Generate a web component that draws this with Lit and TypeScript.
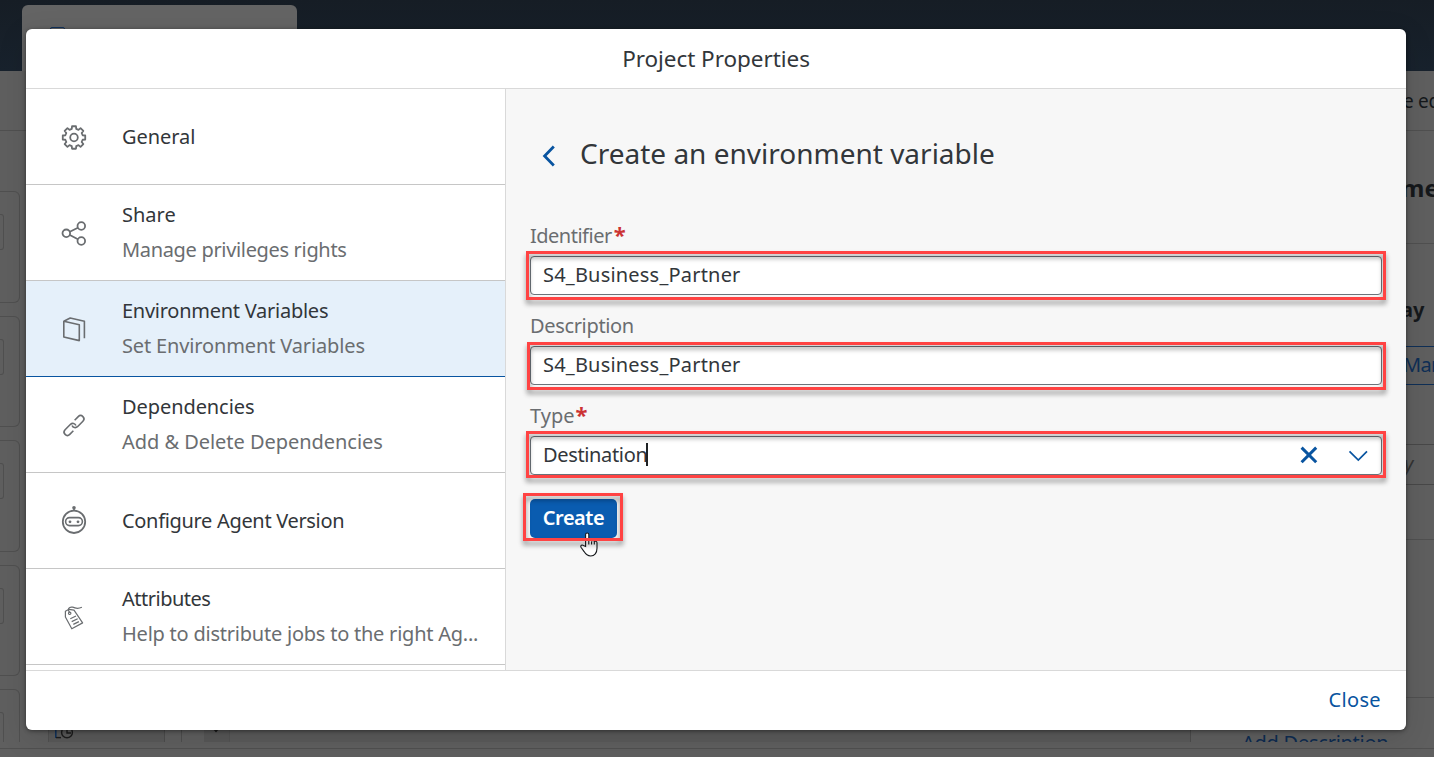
import { LitElement, html, svg, css } from "lit";
import { customElement } from "lit/decorators.js";
import { classMap } from "lit/directives/class-map.js";
import { styleMap } from "lit/directives/style-map.js";

const gearPath = (() => {
  const pts: string[] = [];
  for (let k = 0; k < 8; k++) {
    for (const [r, d] of [[8.9, -14.5], [11.4, -10], [11.4, 10], [8.9, 14.5]]) {
      const a = ((k * 45 + d) * Math.PI) / 180;
      pts.push(`${(13 + r * Math.sin(a)).toFixed(2)} ${(16.5 - r * Math.cos(a)).toFixed(2)}`);
    }
  }
  return `M${pts.join("L")}Z`;
})();

const icons = {
  gear: svg`<path d=${gearPath} stroke-width="1.8"/><circle cx="13" cy="16.5" r="3.8" stroke-width="1.8"/>`,
  share: svg`<g stroke-width="1.8"><circle cx="5.3" cy="16.3" r="3.8"/><circle cx="20.3" cy="9" r="3.8"/><circle cx="20.3" cy="24" r="3.8"/><path d="M8.8 14.8L16.9 10.8M8.8 18L16.9 22.2"/></g>`,
  book: svg`<path d="M2.8 8.3L18.3 11.7V27.6L2.8 24ZM2.8 8.3L9.2 5L23.4 8.2V25.3"/>`,
  link: svg`<g transform="translate(13 16.5) rotate(-45)"><path d="M-4.2 3.3H-9.3a3.3 3.3 0 0 1 0-6.6H-1.6a3.3 3.3 0 0 1 2.9 4.7"/><path d="M4.2-3.3H9.3a3.3 3.3 0 0 1 0 6.6H1.6a3.3 3.3 0 0 1-2.9-4.7"/></g>`,
  robot: svg`<circle cx="13" cy="16.8" r="11.2" stroke-width="1.8"/><rect x="4.6" y="12.6" width="16.8" height="8" rx="4"/><circle cx="9" cy="16.8" r="1.4" class="dot"/><circle cx="17" cy="16.8" r="1.4" class="dot"/><circle cx="13" cy="2.7" r="1.8" class="dot"/><path d="M13 3V6"/>`,
  tag: svg`<g stroke-width="1.2"><path d="M4.4 10.2L8 8.3L13 9.2L21.6 21.9L10.8 27.8L4.4 16Z"/><circle cx="8.7" cy="12.3" r="1.2"/><path d="M8.7 11.5C6 8 8 5.6 11.5 6.2C15 6.8 15.5 8.6 20.9 6.3M9.3 17.7L15 15M10.7 20.6L16.7 17.7M12.3 23.4L17.9 20.6"/></g>`,
};

interface Item { icon: keyof typeof icons; title: string; ts: number; sub?: string; ss?: number; selected?: boolean }

const items: Item[] = [
  { icon: "gear", title: "General", ts: -0.05 },
  { icon: "share", title: "Share", ts: 0 },
  { icon: "book", title: "Environment Variables", ts: -0.26, sub: "Set Environment Variables", ss: -0.14, selected: true },
  { icon: "link", title: "Dependencies", ts: -0.08, sub: "Add & Delete Dependencies", ss: -0.04 },
  { icon: "robot", title: "Configure Agent Version", ts: -0.32 },
  { icon: "tag", title: "Attributes", ts: -0.5, sub: "Help to distribute jobs to the right Ag...", ss: -0.23 },
];
items[1].sub = "Manage privileges rights";
items[1].ss = -0.33;

@customElement("page-backdrop")
class PageBackdrop extends LitElement {
  static styles = css`
    :host { display: flex; flex-direction: column; height: 757px; overflow: hidden; background: #5f5f5f; color: #15181b;
      font-family: "Noto Sans", sans-serif; font-size: 20px; box-sizing: border-box; }
    .shell { height: 71px; padding: 5px 0 0 22px; background: linear-gradient(#161d25, #18222d); box-sizing: border-box; flex: none; }
    .tab { width: 275px; height: 66px; border-radius: 6px 6px 0 0; background: #646464; box-sizing: border-box; padding: 22px 0 0 28px; }
    .tabicon { width: 13px; height: 20px; border: 1px solid #12335c; border-radius: 2px; }
    .bar { height: 59px; border-bottom: 1px solid #505050; line-height: 60px; padding-left: 1403px; white-space: nowrap; flex: none; font-size: 19px; letter-spacing: -0.3px; }
    .main { display: grid; grid-template-columns: 49px 116px 1025px 1fr; grid-template-rows: 100%; height: 611px; overflow: hidden; flex: none; }
    .cards { display: flex; flex-direction: column; gap: 13px; padding-top: 60px; box-sizing: border-box; border-right: 1px solid #505050; }
    .card { width: 20px; height: 111.6px; border: 1px solid #505050; border-left: 0; border-radius: 0 6px 6px 0; box-sizing: border-box; padding-top: 22px; flex: none; }
    .chip { width: 4px; height: 36px; border: 1px solid #505050; border-left: 0; border-radius: 0 3px 3px 0; box-sizing: border-box; }
    .tile { display: flex; align-items: flex-end; background: #595959; border-right: 1px solid #4c4c4c; padding-left: 5px; }
    .tile svg { display: block; }
    .canvas { display: flex; align-items: flex-end; }
    .gap { width: 16px; height: 100%; border-right: 1px solid #4e4e4e; }
    .drop { margin-left: 22px; width: 25px; height: 20px; background: #575757; border-right: 1px solid #525252; }
    .drop svg { display: block; margin-left: 7px; }
    .fill { flex: 1; height: 100%; background: #5a5a5a; }
    .panel { border-left: 1px solid #4c4c4c; display: flex; flex-direction: column; white-space: nowrap; }
    .head { height: 112px; border-bottom: 1px solid #505050; line-height: 113px; font-weight: 700; font-size: 24px; padding-left: 210px; flex: none; }
    .label { height: 102px; font-weight: 700; line-height: 132px; padding-left: 210px; flex: none; }
    .btn { height: 37px; border: 1px solid #0f2f56; border-width: 1px 0; color: #0f2f56; line-height: 36px; padding-left: 212px; letter-spacing: -0.7px; flex: none; }
    .input { margin-top: 59px; height: 39px; border: 1px solid #484848; border-width: 1px 0; line-height: 38px; padding-left: 213px; font-style: italic; color: #333; flex: none; }
    .block { height: 54px; border-bottom: 1px solid #505050; flex: none; }
    .block2 { height: 157px; border-bottom: 1px solid #505050; flex: none; }
    .add { color: #0d2b50; padding: 33px 0 0 51px; line-height: 24px; letter-spacing: -0.25px; flex: none; }
    .status { border-top: 1px solid #505050; margin-top: 6px; flex: 1; }
  `;
  render() {
    return html`
      <div class="shell"><div class="tab"><div class="tabicon"></div></div></div>
      <div class="bar">e editor</div>
      <div class="main">
        <div class="cards">${[0, 1, 2, 3, 4].map(() => html`<div class="card"><div class="chip"></div></div>`)}</div>
        <div class="tile">
          <svg width="24" height="14" viewBox="0 0 24 14" fill="none"><path d="M1.8 0V10" stroke="#12335c" stroke-width="1.6"/><path d="M2 9.6H7" stroke="#1c1c1c" stroke-width="1.4"/><circle cx="13" cy="4.4" r="5.4" stroke="#1c1c1c" stroke-width="1.4"/><path d="M13 1V5H17" stroke="#1c1c1c" stroke-width="1.4"/></svg>
        </div>
        <div class="canvas">
          <div class="gap"></div>
          <div class="drop"><svg width="12" height="14" viewBox="0 0 12 14"><path d="M1 6H9L5 10.600Z" fill="#1a1a1a"/></svg></div>
          <div class="fill"></div>
        </div>
        <div class="panel">
          <div class="head">ment</div>
          <div class="label">ay</div>
          <div class="btn">Manage</div>
          <div class="input">y</div>
          <div class="block"></div>
          <div class="block2"></div>
          <div class="add">Add Description</div>
        </div>
      </div>
      <div class="status"></div>`;
  }
}

@customElement("side-list")
class SideList extends LitElement {
  static styles = css`
    :host { display: block; width: 479px; border-right: 1px solid #d9d9d9; background: #fff; overflow: hidden; }
    .item { height: 96px; box-sizing: border-box; border-bottom: 1px solid #c6c6c6; display: flex; align-items: center; padding: 0 24px 1px 35px; }
    .item.selected { background: #e5f0fa; border-bottom-color: #0854a0; }
    .icon { width: 26px; height: 30px; flex: none; fill: none; stroke: #6a6d70; stroke-width: 1.6; stroke-linejoin: round; }
    .icon .dot { fill: #6a6d70; stroke: none; }
    .text { margin-left: 35px; display: flex; flex-direction: column; white-space: nowrap; font-size: 20px; line-height: 35px; }
    .title { color: #32363a; }
    .sub { color: #6a6d70; }
  `;
  render() {
    return items.map((i) => html`
      <div class=${classMap({ item: true, selected: !!i.selected })}>
        <svg class="icon" viewBox="0 0 26 30">${icons[i.icon]}</svg>
        <div class="text">
          <span class="title" style=${styleMap({ letterSpacing: `${i.ts}px` })}>${i.title}</span>
          ${i.sub ? html`<span class="sub" style=${styleMap({ letterSpacing: `${i.ss}px` })}>${i.sub}</span>` : ""}
        </div>
      </div>`);
  }
}

@customElement("variable-form")
class VariableForm extends LitElement {
  static styles = css`
    :host { display: block; flex: 1; background: #f7f7f7; padding: 0 24px; box-sizing: border-box; color: #32363a; font-size: 20px; }
    .heading { height: 127px; display: flex; align-items: center; }
    .back { margin: 6px 0 0 11px; width: 16px; height: 24px; flex: none; }
    .title { margin-left: 23px; font-size: 28px; line-height: 38px; letter-spacing: 0; }
    .field { height: 90px; }
    .label { height: 40px; line-height: 40px; color: #6a6d70; display: flex; }
    .tight { letter-spacing: -0.5px; }
    .snug { letter-spacing: -0.34px; }
    .req { color: #cc3333; font-weight: 700; font-size: 22px; line-height: 37px; margin-left: 1px; letter-spacing: 0; }
    .tight .req { margin-left: 2px; }
    .box { position: relative; height: 39px; width: 852px; box-sizing: border-box; border: 1px solid #6c737a; border-radius: 4px; background: #fff;
      display: flex; align-items: center; padding: 0 11px 2px 12px; }
    .value { line-height: 36px; letter-spacing: 0.2px; white-space: nowrap; }
    .value.dest { letter-spacing: -0.35px; }
    .caret { width: 2px; height: 23px; background: #1f2225; margin-left: -1px; }
    .tools { margin-left: auto; display: flex; align-items: center; gap: 27px; padding-top: 1px; }
    .tools svg { display: block; }
    .mark { position: absolute; border: 3px solid #ff4343; filter: drop-shadow(0 4px 2.5px rgba(0, 0, 0, 0.42)); pointer-events: none; box-sizing: border-box; }
    .m1 { top: -6px; left: -5px; right: -5px; height: 49px; }
    .m2 { top: -5px; left: -4px; right: -5px; height: 48px; }
    .m3 { top: -6px; left: -5px; right: -5px; height: 47px; }
    .m4 { top: -6px; left: -7px; width: 100px; height: 48px; }
    .create { position: relative; margin-top: 13px; width: 87px; height: 39px; border-radius: 5px; background: #0a5cb0; color: #fff;
      font-weight: 600; text-align: center; line-height: 38px; letter-spacing: -0.5px; }
    .pointer { position: absolute; left: 50px; top: 33px; width: 18px; height: 25px; }
  `;
  render() {
    return html`
      <div class="heading">
        <svg class="back" viewBox="0 0 16 24"><path d="M12.8 2.6L3.6 12L12.8 21.4" fill="none" stroke="#0854a0" stroke-width="2.8"/></svg>
        <div class="title">Create an environment variable</div>
      </div>
      <div class="field">
        <div class="label tight">Identifier<span class="req">*</span></div>
        <div class="box"><span class="value">S4_Business_Partner</span><div class="mark m1"></div></div>
      </div>
      <div class="field">
        <div class="label snug">Description</div>
        <div class="box"><span class="value">S4_Business_Partner</span><div class="mark m2"></div></div>
      </div>
      <div class="field">
        <div class="label">Type<span class="req">*</span></div>
        <div class="box">
          <span class="value dest">Destination</span><div class="caret"></div>
          <div class="tools">
            <svg width="20" height="20" viewBox="0 0 20 20"><path d="M2.6 2.6L17.2 17.2M17.2 2.6L2.6 17.2" stroke="#0854a0" stroke-width="3"/></svg>
            <svg width="24" height="20" viewBox="0 0 24 20"><path d="M3.5 6.3L12.3 15L21 6.3" fill="none" stroke="#0854a0" stroke-width="1.7"/></svg>
          </div>
          <div class="mark m3"></div>
        </div>
      </div>
      <div class="create">Create
        <svg class="pointer" viewBox="0 0 18 25"><path d="M5.6 14.5V2.6a1.6 1.6 0 0 1 3.2 0V9c0-1.4 2.8-1.3 2.8.3c.2-1.2 2.7-1 2.7.5c.3-1 2.7-.7 2.7 1v5.4c0 4.5-2.5 7.8-6.3 7.8c-3.3 0-5-1.6-6.6-4.4L1 15.2c-.8-1.7 1-2.9 2.4-1.7Z" fill="#fff" stroke="#15181b" stroke-width="1.1"/><path d="M8.8 9V12.5M11.6 9.5V12.5M14.3 10V12.5" stroke="#15181b" stroke-width="1.1"/></svg>
        <div class="mark m4"></div>
      </div>`;
  }
}

@customElement("app-root")
class AppRoot extends LitElement {
  static styles = css`
    :host { display: grid; width: 1434px; height: 757px; overflow: hidden; font-family: "Noto Sans", sans-serif; }
    page-backdrop, .dialog { grid-area: 1 / 1; }
    .dialog { margin: 29px 28px 27px 26px; min-width: 0; position: relative; background: #fff; border-radius: 6px; overflow: hidden; display: flex; flex-direction: column; }
    .shade { grid-area: 1 / 1; margin: 29px 28px 27px 26px; border-radius: 6px; box-shadow: 0 1px 4px rgba(0, 0, 0, 0.45), 0 8px 30px rgba(0, 0, 0, 0.12); }
    .header { height: 60px; box-sizing: border-box; border-bottom: 1px solid #d9d9d9; text-align: center; line-height: 59px; font-size: 22.5px; letter-spacing: -0.05px; color: #32363a; flex: none; }
    .body { display: flex; height: 581px; flex: none; }
    .footer { height: 60px; box-sizing: border-box; border-top: 1px solid #d9d9d9; display: flex; align-items: center; justify-content: flex-end; padding: 0 25px 2px 0;
      color: #0854a0; font-size: 20px; letter-spacing: 0.35px; flex: none; }
  `;
  render() {
    return html`
      <page-backdrop></page-backdrop>
      <div class="shade"></div>
      <div class="dialog">
        <div class="header">Project Properties</div>
        <div class="body"><side-list></side-list><variable-form></variable-form></div>
        <div class="footer">Close</div>
      </div>`;
  }
}
